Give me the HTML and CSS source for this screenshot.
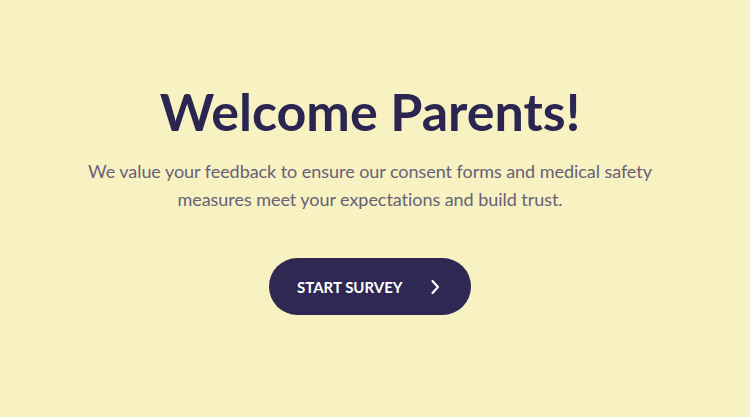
FILE: index.html
```html
<!DOCTYPE html>
<html lang="en">
<head>
<meta charset="utf-8">
<title>Welcome Parents</title>
<link rel="stylesheet" href="styles.css">
</head>
<body>
<main class="hero">
  <h1 class="hero-title">Welcome Parents!</h1>
  <p class="hero-text">We value your feedback to ensure our consent forms and medical safety measures meet your expectations and build trust.</p>
  <button class="cta" type="button">
    <span class="cta-label">START SURVEY</span>
    <svg class="cta-icon" width="10" height="16" viewBox="0 0 10 16" aria-hidden="true">
      <path d="M2.5 2 L8 8 L2.5 14" fill="none" stroke="currentColor" stroke-width="2.2" stroke-linecap="round" stroke-linejoin="round"/>
    </svg>
  </button>
</main>
</body>
</html>
```
FILE: styles.css
```css
* { box-sizing: border-box; }
html, body { margin: 0; padding: 0; }
body {
  background: #f8f1c2;
  font-family: "Lato", "Source Sans Pro", "Noto Sans", sans-serif;
  min-height: 100vh;
}
.hero {
  display: flex;
  flex-direction: column;
  align-items: center;
  text-align: center;
  padding: 80px 10px 0 0;
}
.hero-title {
  margin: 0;
  font-size: 52px;
  font-weight: 700;
  line-height: 62px;
  color: #2b2651;
}
.hero-text {
  margin: 15px 0 0;
  max-width: 600px;
  font-size: 18px;
  line-height: 28px;
  letter-spacing: -0.05px;
  color: #676276;
}
.cta {
  margin-top: 45px;
  display: flex;
  align-items: center;
  width: 202px;
  height: 57px;
  padding: 0 31px 0 28px;
  border: none;
  border-radius: 29px;
  background: #2e2853;
  color: #ffffff;
  font-family: inherit;
  font-size: 15px;
  font-weight: 700;
  white-space: nowrap;
  cursor: pointer;
}
.cta-label { letter-spacing: 0; }
.cta-icon { margin-left: auto; }
```
